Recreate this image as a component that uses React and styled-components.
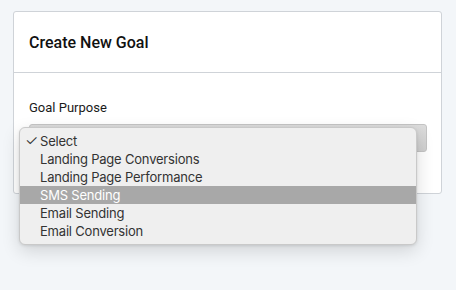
import React from 'react';
import styled, { createGlobalStyle, css } from 'styled-components';

const GlobalStyle = createGlobalStyle`
  html, body {
    margin: 0;
    padding: 0;
    background: #f3f6f9;
    font-family: Roboto, "Liberation Sans", sans-serif;
  }
`;

const Page = styled.div`
  padding: 11px 14px 0 13px;
  height: 290px;
  box-sizing: border-box;
`;

const Card = styled.div`
  width: 429px;
  height: 183px;
  box-sizing: border-box;
  background: #fff;
  border: 1px solid #cfd3d8;
  border-radius: 3px;
`;

const CardHeader = styled.div`
  height: 61px;
  box-sizing: border-box;
  border-bottom: 1px solid #cfd3d8;
  display: flex;
  align-items: center;
  padding: 0 15px;
`;

const Title = styled.h2`
  margin: 0;
  font-size: 16px;
  font-weight: 500;
  color: #111;
`;

const CardBody = styled.div`
  padding: 27px 14px 0 15px;
`;

const Label = styled.div`
  font-size: 13px;
  color: #1a1a1a;
  line-height: 16px;
  margin-bottom: 8px;
`;

const SelectWrap = styled.div`
  position: relative;
  width: 398px;
`;

const SelectBox = styled.div`
  height: 28px;
  box-sizing: border-box;
  border: 1px solid #c4c4c4;
  border-radius: 3px;
  background: linear-gradient(#dcdcdc, #cfcfcf);
`;

const Menu = styled.ul`
  position: absolute;
  left: -10px;
  top: 3px;
  width: 398px;
  margin: 0;
  padding: 4px 0;
  list-style: none;
  box-sizing: border-box;
  background: #efefef;
  border: 1px solid #c9c9c9;
  border-radius: 6px;
  box-shadow: 0 6px 18px rgba(0, 0, 0, 0.14), 0 1px 3px rgba(0, 0, 0, 0.1);
  font-family: Inter, "Liberation Sans", sans-serif;
  font-size: 13px;
  letter-spacing: -0.2px;
  color: #333;
  overflow: hidden;
`;

const Option = styled.li`
  position: relative;
  height: 18px;
  line-height: 18px;
  padding-left: 20px;
  ${props => props.active && css`
    background: #a8a8a8;
    color: #fff;
  `}
`;

const Check = styled.span`
  position: absolute;
  left: 5px;
  top: 0;
  font-size: 15px;
  font-weight: 300;
`;

const options = [
  'Select',
  'Landing Page Conversions',
  'Landing Page Performance',
  'SMS Sending',
  'Email Sending',
  'Email Conversion',
];

const App = () => {
  return (
    <>
      <GlobalStyle />
      <Page>
        <Card>
          <CardHeader>
            <Title>Create New Goal</Title>
          </CardHeader>
          <CardBody>
            <Label>Goal Purpose</Label>
            <SelectWrap>
              <SelectBox />
              <Menu>
                {options.map((opt, i) => (
                  <Option key={opt} active={i === 3}>
                    {i === 0 && <Check>✓</Check>}
                    {opt}
                  </Option>
                ))}
              </Menu>
            </SelectWrap>
          </CardBody>
        </Card>
      </Page>
    </>
  );
};

export default App;
